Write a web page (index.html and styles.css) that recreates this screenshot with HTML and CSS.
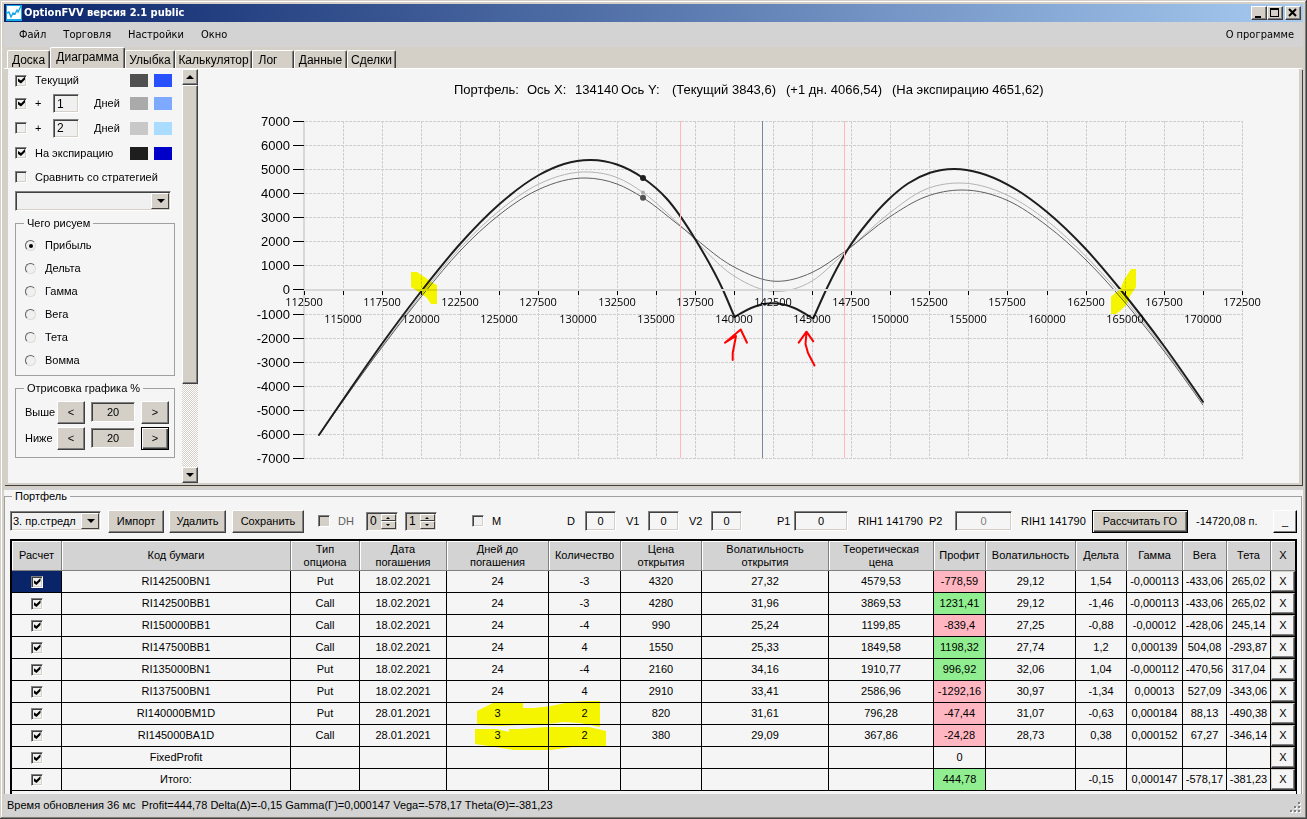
FILE: index.html
```html
<!DOCTYPE html>
<html lang="ru">
<head>
<meta charset="utf-8">
<title>OptionFVV версия 2.1 public</title>
<link rel="stylesheet" href="styles.css">
</head>
<body>
<div class="window">
  <header class="titlebar">
    <svg class="app-icon" width="16" height="16" viewBox="0 0 16 16" aria-hidden="true"><rect width="16" height="16" fill="#18a8e8"/><rect x="1" y="1" width="14" height="13" fill="#fff"/><path d="M1 8l2-1 2 5 2-4 2 1 2-4 1 2 3-6" fill="none" stroke="#18a8e8" stroke-width="1.4"/></svg>
    <h1 class="title">OptionFVV версия 2.1 public</h1>
    <div class="win-buttons">
      <button class="win-btn" type="button" aria-label="Свернуть"><svg width="14" height="12" viewBox="0 0 14 12"><path d="M3 9h6v2H3z"/></svg></button>
      <button class="win-btn" type="button" aria-label="Развернуть"><svg width="14" height="12" viewBox="0 0 14 12"><path d="M2 1h9v9H2zM3 3v6h7V3z" fill-rule="evenodd"/></svg></button>
      <button class="win-btn win-close" type="button" aria-label="Закрыть"><svg width="14" height="12" viewBox="0 0 14 12"><path d="M3 2l7 7M10 2L3 9" stroke="#000" stroke-width="2"/></svg></button>
    </div>
  </header>
  <nav class="menu">
    <a href="#">Файл</a><a href="#">Торговля</a><a href="#">Настройки</a><a href="#">Окно</a><a href="#" class="menu-about">О программе</a>
  </nav>
  <div class="tabs" role="tablist">
    <button type="button" role="tab" class="tab tab-board">Доска</button>
    <button type="button" role="tab" class="tab tab-active" aria-selected="true">Диаграмма</button>
    <button type="button" role="tab" class="tab tab-smile">Улыбка</button>
    <button type="button" role="tab" class="tab tab-calc">Калькулятор</button>
    <button type="button" role="tab" class="tab tab-log">Лог</button>
    <button type="button" role="tab" class="tab tab-data">Данные</button>
    <button type="button" role="tab" class="tab tab-deals">Сделки</button>
  </div>
  <main class="page">
    <aside class="side">
      <div class="series">
        <div class="series-row"><input type="checkbox" class="check" id="s0" checked><label for="s0">Текущий</label><i class="swatch sw-a"></i><i class="swatch sw-b"></i></div>
        <div class="series-row"><input type="checkbox" class="check" id="s1" checked><label class="plus" for="s1">+</label><input class="field days" id="d1" value="1"><label class="days-label" for="d1">Дней</label><i class="swatch sw-c"></i><i class="swatch sw-d"></i></div>
        <div class="series-row tall"><input type="checkbox" class="check" id="s2"><label class="plus" for="s2">+</label><input class="field days" id="d2" value="2"><label class="days-label" for="d2">Дней</label><i class="swatch sw-e"></i><i class="swatch sw-f"></i></div>
        <div class="series-row"><input type="checkbox" class="check" id="s3" checked><label for="s3">На экспирацию</label><i class="swatch sw-g"></i><i class="swatch sw-h"></i></div>
        <div class="series-row"><input type="checkbox" class="check" id="s4"><label for="s4">Сравнить со стратегией</label></div>
      </div>
      <div class="combo combo-strategy"><select aria-label="Стратегия"><option></option></select></div>
      <fieldset class="group group-draw">
        <legend>Чего рисуем</legend>
        <label class="radio-row"><input type="radio" name="draw" checked>Прибыль</label>
        <label class="radio-row"><input type="radio" name="draw">Дельта</label>
        <label class="radio-row"><input type="radio" name="draw">Гамма</label>
        <label class="radio-row"><input type="radio" name="draw">Вега</label>
        <label class="radio-row"><input type="radio" name="draw">Тета</label>
        <label class="radio-row"><input type="radio" name="draw">Вомма</label>
      </fieldset>
      <fieldset class="group group-range">
        <legend>Отрисовка графика %</legend>
        <div class="range-row"><label for="hi">Выше</label><button class="btn step" type="button">&lt;</button><input class="field range" id="hi" value="20"><button class="btn step" type="button">&gt;</button></div>
        <div class="range-row"><label for="lo">Ниже</label><button class="btn step" type="button">&lt;</button><input class="field range" id="lo" value="20"><button class="btn step btn-default" type="button">&gt;</button></div>
      </fieldset>
    </aside>
    <div class="scroll">
      <button class="scroll-btn up" type="button" aria-label="Вверх"></button>
      <div class="thumb"></div>
      <div class="track"></div>
      <button class="scroll-btn down" type="button" aria-label="Вниз"></button>
    </div>
    <section class="chart">
      <svg id="chart" viewBox="198 69 1101 414" role="img" aria-label="Портфель"></svg>
    </section>
  </main>
  <section class="portfolio">
    <fieldset class="portfolio-group">
      <legend>Портфель</legend>
      <div class="toolbar">
        <div class="combo combo-name"><select aria-label="Портфель"><option>3. пр.стредл</option></select></div>
        <button class="btn b-import" type="button">Импорт</button>
        <button class="btn b-delete" type="button">Удалить</button>
        <button class="btn b-save" type="button">Сохранить</button>
        <label class="flag flag-dh"><input type="checkbox" class="check">DH</label>
        <div class="spin"><input aria-label="DH 1" value="0"><button type="button" class="spin-up" aria-label="Больше"></button><button type="button" class="spin-down" aria-label="Меньше"></button></div>
        <div class="spin"><input aria-label="DH 2" value="1"><button type="button" class="spin-up" aria-label="Больше"></button><button type="button" class="spin-down" aria-label="Меньше"></button></div>
        <label class="flag flag-m"><input type="checkbox" class="check">M</label>
        <label class="param param-d">D<input class="field" value="0"></label>
        <label class="param param-v">V1<input class="field" value="0"></label>
        <label class="param param-v">V2<input class="field" value="0"></label>
        <label class="param param-p1">P1<input class="field" value="0"></label>
        <span class="quote">RIH1 141790</span>
        <label class="param param-p2">P2<input class="field" value="0" disabled></label>
        <span class="quote quote-2">RIH1 141790</span>
        <button class="btn btn-default b-go" type="button">Рассчитать ГО</button>
        <output class="go">-14720,08 п.</output>
        <button class="btn b-min" type="button">_</button>
      </div>
      <div class="grid-wrap">
        <table class="grid">
          <colgroup><col class="c50"><col><col class="c69"><col class="c87"><col class="c102"><col class="c72"><col class="c81"><col class="c127"><col class="c105"><col class="c52"><col class="c90"><col class="c51"><col class="c56"><col class="c44"><col class="c44"><col class="c25"></colgroup>
          <thead><tr><th>Расчет</th><th>Код бумаги</th><th>Тип<br>опциона</th><th>Дата<br>погашения</th><th>Дней до<br>погашения</th><th>Количество</th><th>Цена<br>открытия</th><th>Волатильность<br>открытия</th><th>Теоретическая<br>цена</th><th>Профит</th><th>Волатильность</th><th>Дельта</th><th>Гамма</th><th>Вега</th><th>Тета</th><th>X</th></tr></thead>
          <tbody>
            <tr><td class="current"><input type="checkbox" class="check" aria-label="Расчет" checked></td><td>RI142500BN1</td><td>Put</td><td>18.02.2021</td><td>24</td><td>-3</td><td>4320</td><td>27,32</td><td>4579,53</td><td class="loss">-778,59</td><td>29,12</td><td>1,54</td><td>-0,000113</td><td>-433,06</td><td>265,02</td><td><button class="del" type="button">X</button></td></tr>
            <tr><td><input type="checkbox" class="check" aria-label="Расчет" checked></td><td>RI142500BB1</td><td>Call</td><td>18.02.2021</td><td>24</td><td>-3</td><td>4280</td><td>31,96</td><td>3869,53</td><td class="gain">1231,41</td><td>29,12</td><td>-1,46</td><td>-0,000113</td><td>-433,06</td><td>265,02</td><td><button class="del" type="button">X</button></td></tr>
            <tr><td><input type="checkbox" class="check" aria-label="Расчет" checked></td><td>RI150000BB1</td><td>Call</td><td>18.02.2021</td><td>24</td><td>-4</td><td>990</td><td>25,24</td><td>1199,85</td><td class="loss">-839,4</td><td>27,25</td><td>-0,88</td><td>-0,00012</td><td>-428,06</td><td>245,14</td><td><button class="del" type="button">X</button></td></tr>
            <tr><td><input type="checkbox" class="check" aria-label="Расчет" checked></td><td>RI147500BB1</td><td>Call</td><td>18.02.2021</td><td>24</td><td>4</td><td>1550</td><td>25,33</td><td>1849,58</td><td class="gain">1198,32</td><td>27,74</td><td>1,2</td><td>0,000139</td><td>504,08</td><td>-293,87</td><td><button class="del" type="button">X</button></td></tr>
            <tr><td><input type="checkbox" class="check" aria-label="Расчет" checked></td><td>RI135000BN1</td><td>Put</td><td>18.02.2021</td><td>24</td><td>-4</td><td>2160</td><td>34,16</td><td>1910,77</td><td class="gain">996,92</td><td>32,06</td><td>1,04</td><td>-0,000112</td><td>-470,56</td><td>317,04</td><td><button class="del" type="button">X</button></td></tr>
            <tr><td><input type="checkbox" class="check" aria-label="Расчет" checked></td><td>RI137500BN1</td><td>Put</td><td>18.02.2021</td><td>24</td><td>4</td><td>2910</td><td>33,41</td><td>2586,96</td><td class="loss">-1292,16</td><td>30,97</td><td>-1,34</td><td>0,00013</td><td>527,09</td><td>-343,06</td><td><button class="del" type="button">X</button></td></tr>
            <tr><td><input type="checkbox" class="check" aria-label="Расчет" checked></td><td>RI140000BM1D</td><td>Put</td><td>28.01.2021</td><td class="marked">3<svg class="marker" width="140" height="54" viewBox="447 699 140 54" aria-hidden="true"><path d="M477 711L483 708L493 703H523V708L534 708L551 706L570 702L587 701H600V727L580 723L564 722L547 724L520 725L500 726L479 725L477 723Z"/><path d="M475 729H497L509 732V729H520L547 727L575 727L589 727L606 731V747H572L551 750H514L495 747L475 744Z"/></svg></td><td>2</td><td>820</td><td>31,61</td><td>796,28</td><td class="loss">-47,44</td><td>31,07</td><td>-0,63</td><td>0,000184</td><td>88,13</td><td>-490,38</td><td><button class="del" type="button">X</button></td></tr>
            <tr><td><input type="checkbox" class="check" aria-label="Расчет" checked></td><td>RI145000BA1D</td><td>Call</td><td>28.01.2021</td><td>3</td><td>2</td><td>380</td><td>29,09</td><td>367,86</td><td class="loss">-24,28</td><td>28,73</td><td>0,38</td><td>0,000152</td><td>67,27</td><td>-346,14</td><td><button class="del" type="button">X</button></td></tr>
            <tr><td><input type="checkbox" class="check" aria-label="Расчет" checked></td><td>FixedProfit</td><td></td><td></td><td></td><td></td><td></td><td></td><td></td><td>0</td><td></td><td></td><td></td><td></td><td></td><td><button class="del" type="button">X</button></td></tr>
            <tr><td><input type="checkbox" class="check" aria-label="Расчет" checked></td><td>Итого:</td><td></td><td></td><td></td><td></td><td></td><td></td><td></td><td class="gain">444,78</td><td></td><td>-0,15</td><td>0,000147</td><td>-578,17</td><td>-381,23</td><td><button class="del" type="button">X</button></td></tr>
          </tbody>
        </table>
      </div>
    </fieldset>
  </section>
  <footer class="status">
    <span>Время обновления 36 мс&nbsp; Profit=444,78 Delta(Δ)=-0,15 Gamma(Γ)=0,000147 Vega=-578,17 Theta(Θ)=-381,23</span>
    <svg class="grip" width="12" height="12" viewBox="0 0 12 12" aria-hidden="true"><path d="M9 1h2v2H9zM5 5h2v2H5zM9 5h2v2H9zM1 9h2v2H1zM5 9h2v2H5zM9 9h2v2H9z" fill="#fff"/><path d="M8 0h2v2H8zM4 4h2v2H4zM8 4h2v2H8zM0 8h2v2H0zM4 8h2v2H4zM8 8h2v2H8z" fill="#808080"/></svg>
  </footer>
</div>
<script src="chart.js"></script>
</body>
</html>
```

FILE: styles.css
```css
* { box-sizing: border-box; }
body {
  margin: 0;
  background: #d4d0c8;
  color: #000;
  font: 11px/13px "Liberation Sans", Arial, sans-serif;
}
button, input, select { font: inherit; color: inherit; margin: 0; }
button { padding: 0; }

.window {
  display: flex;
  flex-direction: column;
  min-height: 100vh;
  padding: 4px 4px 3px;
  background: #d4d0c8;
  box-shadow: inset -1px -1px #404040, inset 1px 1px #d4d0c8, inset -2px -2px #808080, inset 2px 2px #fff;
}

/* title bar */
.titlebar {
  display: flex;
  align-items: center;
  height: 18px;
  padding: 0 2px;
  background: linear-gradient(90deg, #0a246a, #a6caf0);
}
.title {
  flex: 1;
  margin: 0 0 0 2px;
  color: #fff;
  font: bold 11px/16px "DejaVu Sans Condensed", "DejaVu Sans", sans-serif;
}
.win-buttons { display: flex; }
.win-btn {
  width: 16px;
  height: 14px;
  border: 1px solid;
  border-color: #fff #404040 #404040 #fff;
  background: #d4d0c8;
  box-shadow: inset -1px -1px #808080;
}
.win-btn svg { display: block; }
.win-close { margin-left: 2px; }

/* menu and tabs */
.menu {
  display: flex;
  align-items: center;
  gap: 17px;
  height: 25px;
  padding: 0 9px 0 15px;
  background: #d3d3d3;
  font: 11px/13px "DejaVu Sans Condensed", "DejaVu Sans", sans-serif;
}
.menu a { color: #000; text-decoration: none; }
.menu-about { margin-left: auto; }
.tabs {
  display: flex;
  align-items: flex-end;
  height: 22px;
  padding-left: 3px;
  font-size: 12px;
}
.tab {
  height: 19px;
  border: 1px solid;
  border-color: #fff #404040 transparent #fff;
  border-radius: 2px 2px 0 0;
  border-bottom: 0;
  background: #d4d0c8;
  box-shadow: inset -1px 0 #808080;
  white-space: nowrap;
}
.tab-board { width: 43px; }
.tab-active { width: 75px; height: 22px; padding-bottom: 3px; }
.tab-smile { width: 50px; }
.tab-calc { width: 77px; }
.tab-log { width: 42px; padding-right: 10px; }
.tab-data { width: 53px; }
.tab-deals { width: 49px; }

/* diagram page */
.page {
  flex: 1;
  display: flex;
  margin-right: 1px;
  border-left: 4px solid #d4d0c8;
  border-right: 3px solid #d4d0c8;
  border-bottom: 2px solid #d4d0c8;
  background: #f5f5f5;
  box-shadow: 0 -1px #fff, 1px 1px #404040;
}
.side { width: 174px; padding-left: 7px; }
.series-row { display: flex; align-items: center; height: 24px; gap: 6px; }
.series-row:first-child { height: 23px; }
.series-row:nth-child(2) { height: 23px; }
.series-row.tall { height: 26px; }
.series-row .check { margin-right: 2px; }
.series-row label:not(.plus):not(.days-label) { width: 123px; flex: none; white-space: nowrap; }
.series-row label:nth-of-type(1):not(.plus):has(+ .swatch) { width: 89px; }
.series-row .plus { width: 12px; }
.series-row .days { width: 26px; height: 19px; }
.days-label { width: 30px; margin-left: 9px; }
.swatch { flex: none; width: 18px; height: 13px; }
.sw-a { background: #505050; } .sw-b { background: #2850ff; }
.sw-c { background: #aaa; } .sw-d { background: #7daaff; }
.sw-e { background: #c8c8c8; } .sw-f { background: #aadcff; }
.sw-g { background: #1e1e1e; } .sw-h { background: #0000c8; }

.check {
  appearance: none;
  flex: none;
  display: inline-block;
  width: 12px;
  height: 12px;
  padding: 1px 2px;
  border: 1px solid;
  border-color: #808080 #fff #fff #808080;
  background: #f0f0f0;
  box-shadow: inset 1px 1px #404040, inset -1px -1px #d4d0c8;
}
.check:checked::before {
  content: "";
  display: block;
  width: 7px;
  height: 7px;
  background: #000;
  clip-path: polygon(0 2px, 3px 4px, 7px 0, 7px 3px, 3px 7px, 0 5px);
}
.field {
  border: 1px solid;
  border-color: #808080 #fff #fff #808080;
  border-radius: 0;
  background: #f0f0f0;
  box-shadow: inset 1px 1px #404040, inset -1px -1px #d4d0c8;
  padding: 1px 3px;
  outline: 0;
}
.series .field { font-size: 12px; }

.combo {
  position: relative;
  height: 20px;
  border: 1px solid;
  border-color: #808080 #fff #fff #808080;
  background: #f0f0f0;
  box-shadow: inset 1px 1px #404040, inset -1px -1px #d4d0c8;
}
.combo select {
  appearance: none;
  width: 100%;
  height: 100%;
  padding: 0 18px 0 2px;
  border: 0;
  background: none;
}
.combo::before {
  content: "";
  position: absolute;
  top: 1px;
  right: 1px;
  bottom: 1px;
  width: 16px;
  border: 1px solid;
  border-color: #fff #404040 #404040 #fff;
  background: #d4d0c8;
}
.combo::after {
  content: "";
  position: absolute;
  top: 7px;
  right: 5px;
  border: 4px solid transparent;
  border-top-color: #000;
  border-bottom: 0;
}
.combo-strategy { width: 156px; margin-top: 2px; }

.group {
  width: 160px;
  margin: 6px 0 0;
  padding: 4px 4px 0 9px;
  border: 1px solid #a0a0a0;
}
.group legend { margin-left: -1px; padding: 0 3px; line-height: 13px; white-space: nowrap; }
.group-draw { padding-bottom: 3px; }
.radio-row { display: flex; align-items: center; gap: 9px; height: 23px; }
.radio-row input {
  appearance: none;
  width: 11px;
  height: 11px;
  padding: 3px;
  border: 1px solid;
  border-color: #606060 #e0dcd4 #e0dcd4 #606060;
  border-radius: 50%;
  background: #f0f0f0;
}
.radio-row input:checked::before {
  content: "";
  display: block;
  width: 4px;
  height: 4px;
  margin-left: 0;
  border-radius: 50%;
  background: #000;
}
.group-range { padding-bottom: 6px; }
.range-row { display: flex; align-items: center; height: 26px; gap: 6px; }
.range-row label { width: 26px; white-space: nowrap; }
.range { width: 44px; height: 20px; background: #d4d0c8; text-align: center; }

.btn {
  height: 23px;
  border: 1px solid;
  border-color: #fff #404040 #404040 #fff;
  background: #d4d0c8;
  box-shadow: inset -1px -1px #808080;
  white-space: nowrap;
}
.btn-default {
  border-color: #000;
  box-shadow: inset 1px 1px #fff, inset -1px -1px #404040, inset -2px -2px #808080;
}
.step { flex: none; width: 28px; }

.scroll { display: flex; flex-direction: column; width: 16px; }
.scroll-btn, .thumb {
  border: 1px solid;
  border-color: #fff #404040 #404040 #fff;
  background: #d4d0c8;
  box-shadow: inset -1px -1px #808080;
}
.scroll-btn { position: relative; height: 16px; }
.scroll-btn::before {
  content: "";
  position: absolute;
  top: 5px;
  left: 3px;
  border: 4px solid transparent;
}
.up::before { border-bottom-color: #000; border-top: 0; }
.down::before { border-top-color: #000; border-bottom: 0; }
.thumb { flex: 18; }
.track { flex: 5; background: repeating-conic-gradient(#d4d0c8 0 25%, #fff 0 50%) 0 0 / 2px 2px; }

/* chart */
.chart { flex: 1; min-width: 0; display: flex; }
.chart svg { display: block; width: 100%; height: 100%; }
.plot-line { fill: none; stroke: #cfcfcf; stroke-dasharray: 3 1; }
.axis { fill: none; stroke: #d8d8d8; stroke-width: 2; }
.tick { fill: none; stroke: #000; }
.text-y { font-size: 13px; text-anchor: end; }
.text-x { font: 11px "Open Sans", "Noto Sans", sans-serif; text-anchor: middle; }
.text-title { font-size: 13px; white-space: pre; }
.highlight { fill: #ff0; mix-blend-mode: multiply; }
.arrow { fill: none; stroke: #f00; stroke-width: 2; stroke-linecap: round; stroke-linejoin: round; }

/* portfolio */
.portfolio { margin: 3px 0 0; border-top: 2px solid #d3d0d0; background: #f5f5f5; }
.portfolio-group {
  min-width: 0;
  margin: 0 1px 0 0;
  padding: 0 4px 0 5px;
  border: 1px solid #a0a0a0;
  border-bottom: 0;
}
.portfolio-group legend { margin-left: 2px; padding: 0 3px; }
.toolbar { display: flex; align-items: center; height: 36px; white-space: nowrap; }
.combo-name { width: 91px; }
.b-import { width: 56px; margin-left: 7px; }
.b-delete { width: 57px; margin-left: 5px; }
.b-save { width: 72px; margin-left: 6px; }
.flag { display: flex; align-items: center; gap: 8px; }
.flag-dh { width: 48px; margin-left: 14px; color: #606060; }
.flag-dh .check { background: #d4d0c8; }
.spin {
  display: grid;
  grid-template: 1fr 1fr / 1fr 15px;
  width: 32px;
  height: 19px;
  padding: 1px;
  border: 1px solid;
  border-color: #808080 #fff #fff #808080;
  background: #d4d0c8;
  box-shadow: inset 1px 1px #404040;
}
.spin + .spin { margin-left: 7px; }
.spin input { grid-row: 1 / 3; width: 100%; min-width: 0; padding: 0 2px; border: 0; background: none; font-size: 12px; }
.spin button { position: relative; border: 1px solid; border-color: #fff #404040 #404040 #fff; background: #d4d0c8; }
.spin button::before { content: ""; position: absolute; left: 4px; top: 2px; border: 2px solid transparent; }
.spin .spin-up::before { border-bottom-color: #000; border-top: 0; }
.spin .spin-down::before { border-top-color: #000; border-bottom: 0; }
.flag-m { width: 95px; margin-left: 35px; }
.param { display: flex; align-items: center; justify-content: space-between; }
.param .field { width: 31px; height: 20px; background: #f5f5f5; text-align: center; }
.param .field:disabled { color: #808080; }
.param-d { width: 49px; }
.param-v { width: 53px; margin-left: 10px; }
.param-p1 { width: 71px; margin-left: 35px; }
.param-p1 .field { width: 54px; }
.quote { width: 64px; margin-left: 10px; }
.param-p2 { width: 83px; margin-left: 7px; }
.param-p2 .field { width: 57px; }
.quote-2 { margin-left: 9px; }
.b-go { width: 96px; margin-left: 7px; }
.go { margin-left: 8px; }
.b-min { width: 24px; margin-left: auto; background: #f5f5f5; border-color: #fff #000 #000 #fff; }

.grid-wrap {
  padding-bottom: 3px;
  border: 2px solid #000;
  border-width: 2px 1px 0 2px;
}
.grid { width: 100%; table-layout: fixed; border-collapse: separate; border-spacing: 0; }
.c25 { width: 25px; } .c44 { width: 44px; } .c50 { width: 50px; } .c51 { width: 51px; }
.c52 { width: 52px; } .c56 { width: 56px; } .c69 { width: 69px; } .c72 { width: 72px; }
.c81 { width: 81px; } .c87 { width: 87px; } .c90 { width: 90px; } .c102 { width: 102px; }
.c105 { width: 105px; } .c127 { width: 127px; }
.grid th {
  height: 30px;
  padding: 0;
  border-right: 1px solid #808080;
  border-bottom: 1px solid #808080;
  background: #d3d3d3;
  box-shadow: inset 1px 1px #fff;
  font-weight: normal;
  text-align: center;
}
.grid td {
  height: 22px;
  padding: 0;
  border-right: 1px solid #000;
  border-bottom: 1px solid #000;
  text-align: center;
  white-space: nowrap;
}
.grid td .check { vertical-align: middle; }
.grid tr > :last-child { border-right-color: #000; }
.grid .current { background: #0a246a; }
.grid .loss { background: #ffb6c1; }
.grid .gain { background: #90ee90; }
.del {
  display: block;
  width: 100%;
  height: 21px;
  border: 1px solid;
  border-color: #d4d0c8 #404040 #404040 #d4d0c8;
  background: #f5f5f5;
  box-shadow: inset -1px -1px #808080;
}
.marked { position: relative; }
.marker { position: absolute; top: -4px; left: 0; overflow: visible; fill: #ff0; mix-blend-mode: multiply; pointer-events: none; }

/* status bar */
.status {
  display: flex;
  align-items: center;
  justify-content: space-between;
  height: 22px;
  padding: 0 1px 0 3px;
  background: #d3d3d3;
}
.grip { align-self: flex-end; margin-bottom: 2px; }
```

FILE: chart.js
```js
const svg = document.getElementById("chart");
const add = (tag, attrs, text) => {
  const el = document.createElementNS("http://www.w3.org/2000/svg", tag);
  for (const key in attrs) el.setAttribute(key, attrs[key]);
  if (text !== undefined) el.textContent = text;
  svg.appendChild(el);
};
const px = i => Math.round(304 + 39.083 * i) + 0.5;
const py = i => (i < 8 ? 121.5 : 122.5) + 24 * i;

const titleParts = [
  [454, "Портфель:"], [527, "Ось X:"], [575, "134140"], [621, "Ось Y:"],
  [672, "(Текущий 3843,6)"], [786, "(+1 дн. 4066,54)"], [892, "(На экспирацию 4651,62)"],
];
for (const [x, text] of titleParts) add("text", { class: "text-title", x, y: 94 }, text);

let grid = "";
for (let i = 1; i <= 24; i++) grid += `M${px(i)} 121V458`;
for (let i = 0; i <= 14; i++) grid += `M305 ${py(i)}H1243`;
add("path", { class: "plot-line", d: grid });

// Smooth cubic through unevenly spaced points; tangents are weighted by segment length
const curve = p => {
  const n = p.length - 1;
  const h = [], s = [];
  for (let i = 0; i < n; i++) {
    h[i] = p[i + 1][0] - p[i][0];
    s[i] = (p[i + 1][1] - p[i][1]) / h[i];
  }
  const m = p.map((_, i) => i && i < n ? (s[i - 1] * h[i] + s[i] * h[i - 1]) / (h[i] + h[i - 1]) : 0);
  m[0] = (3 * s[0] - m[1]) / 2;
  m[n] = (3 * s[n - 1] - m[n - 1]) / 2;
  let d = `M${p[0]}`;
  for (let i = 0; i < n; i++) {
    const u = h[i] / 3, [x0, y0] = p[i], [x1, y1] = p[i + 1];
    d += `C${x0 + u} ${y0 + m[i] * u} ${x1 - u} ${y1 - m[i + 1] * u} ${x1} ${y1}`;
  }
  return d;
};
const nextDay = [[319,435],[392,333],[424,291],[460,248],[499,211],[539,184],[590,172],[617,177.5],[643,192.5],[680,225],[734,276],[775,291.5],[812,281],[844,253.5],[890,212.7],[924,190],[958,183],[1008,195.5],[1047,220.7],[1086,256.5],[1116,289],[1164,349],[1203,403]];
const current = [[319,435],[392,334],[425,292],[460,251],[499,215],[539,189.3],[586,178],[617,184],[643,197.7],[680,226],[734,267],[776,281.3],[812,272.5],[844,252],[890,216.7],[925,197],[962,190],[1008,200.7],[1047,225.7],[1086,260],[1115,291],[1164,351],[1203,405]];
const expiryLeft = [[319,435],[392,330],[423,289],[460,244],[499,204.5],[539,175],[564,164],[591,160],[617,164.5],[643,178],[667,199],[696,240.5],[723,290],[734.5,317]];
const expiryMid = [[734.5,317],[755,306.5],[773,303.3],[793,307.5],[812,318]];
const expiryRight = [[813.5,318],[827,288],[848,249],[868,222],[888,200],[908,183.5],[930,172.8],[954,169],[980,173],[1008,184.8],[1047,212],[1086,249.3],[1120,289],[1164,346],[1203,401.7]];
add("path", { d: curve(nextDay), fill: "none", stroke: "#b4b4b4" });
add("path", { d: curve(current), fill: "none", stroke: "#606060" });
for (const part of [expiryLeft, expiryMid, expiryRight])
  add("path", { d: curve(part), fill: "none", stroke: "#1e1e1e", "stroke-width": 2, "stroke-linecap": "round" });
add("circle", { cx: 643, cy: 178, r: 3, fill: "#1e1e1e" });
add("circle", { cx: 643, cy: 192.5, r: 2, fill: "#aaa" });
add("circle", { cx: 643, cy: 197.7, r: 3, fill: "#505050" });

add("path", { class: "axis", d: "M304 121V459M304 290H1243" });
add("path", { d: "M680.5 121V458M844.5 121V458", stroke: "#ffb6c1" });
add("path", { d: "M762.5 121V458", stroke: "#778899" });

let ticks = "";
for (let i = 0; i <= 14; i++) {
  ticks += `M293 ${py(i)}H304`;
  add("text", { class: "text-y", x: 290, y: py(i) + 4 }, 7000 - 1000 * i);
}
for (let i = 0; i <= 24; i++) {
  ticks += `M${px(i)} 291V295`;
  add("text", { class: "text-x", x: px(i) - 0.5, y: i % 2 ? 323 : 306 }, 112500 + 2500 * i);
}
add("path", { class: "tick", d: ticks });

add("path", { class: "highlight", d: "M411 272H417L426 278L431 282L437 285V304H431L427 298L420 293L416 290L411 287Z" });
add("path", { class: "highlight", d: "M1131 269H1136V287L1130 296L1126 305L1120 311L1116 314H1111V297L1115 293L1120 290L1124 280Z" });
add("path", { class: "arrow", d: "M732.7 360V353L736 336L725 342.7L740.7 329.5L747 342.7" });
add("path", { class: "arrow", d: "M814.5 365.5L808 353L805.5 344L806.5 332M798.7 342.7L806.5 331.7L813.3 341.3" });
```
